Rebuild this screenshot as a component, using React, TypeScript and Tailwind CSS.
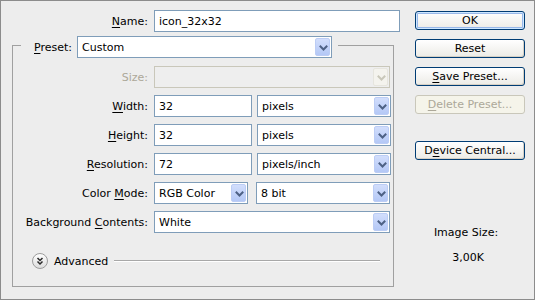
import React from "react";

type SelectProps = {
  value?: string;
  width: string;
  disabled?: boolean;
};

function Chevron({ disabled }: { disabled?: boolean }) {
  return (
    <svg width="15" height="18" viewBox="0 0 15 18">
      <path
        d="M4.5 7.5 L7.5 10.5 L10.5 7.5"
        fill="none"
        stroke={disabled ? "#c9c7ba" : "#4d6185"}
        strokeWidth="2"
        strokeLinecap="square"
      />
    </svg>
  );
}

function Select({ value, width, disabled }: SelectProps) {
  return (
    <div
      className={`${width} h-[22px] flex items-center border ${
        disabled
          ? "border-[#c9c7ba] bg-[#eeeeee]"
          : "border-[#7f9db9] bg-white"
      }`}
    >
      <span className="flex-1 pl-[4px] truncate">{value}</span>
      <div
        className={`w-[15px] h-[18px] mr-[1px] rounded-[2px] border ${
          disabled
            ? "border-[#e6e5de] bg-[#f4f3ee]"
            : "border-[#bccdf5] bg-linear-to-b from-[#d2defc] to-[#b4c8f6]"
        }`}
      >
        <Chevron disabled={disabled} />
      </div>
    </div>
  );
}

function Input({ value, width }: { value: string; width: string }) {
  return (
    <div
      className={`${width} h-[22px] flex items-center border border-[#7f9db9] bg-white pl-[4px]`}
    >
      {value}
    </div>
  );
}

function Label({
  pre,
  u,
  post,
  width,
  disabled,
}: {
  pre?: string;
  u?: string;
  post: string;
  width: string;
  disabled?: boolean;
}) {
  return (
    <div
      className={`${width} text-right shrink-0 ${
        disabled ? "text-[#aca899]" : "text-black"
      }`}
    >
      {pre}
      {u && <span className="underline underline-offset-2">{u}</span>}
      {post}
    </div>
  );
}

function Btn({
  children,
  disabled,
  isDefault,
}: {
  children: React.ReactNode;
  disabled?: boolean;
  isDefault?: boolean;
}) {
  if (disabled) {
    return (
      <div className="w-[110px] h-[19px] rounded-[3px] border border-[#c9c7ba] bg-[#f5f4ea] text-[#aca899] flex items-center justify-center">
        {children}
      </div>
    );
  }
  return (
    <div
      className={`w-[110px] h-[19px] rounded-[3px] border border-[#003c74] bg-linear-to-b from-white to-[#ecebe6] text-black flex items-center justify-center ${
        isDefault
          ? "shadow-[inset_0_0_0_1px_#cee7ff,inset_0_0_0_2px_#98b8ea]"
          : "shadow-[inset_-1px_-1px_0_#d6d0c5]"
      }`}
    >
      {children}
    </div>
  );
}

function AdvancedIcon() {
  return (
    <svg width="16" height="16" viewBox="0 0 16 16">
      <defs>
        <linearGradient id="adv" x1="0" y1="0" x2="0" y2="1">
          <stop offset="0" stopColor="#ffffff" />
          <stop offset="1" stopColor="#dcdcdc" />
        </linearGradient>
      </defs>
      <circle cx="8" cy="8" r="7.5" fill="url(#adv)" stroke="#9c9c9c" />
      <path
        d="M5.5 5 L8 7.5 L10.5 5 M5.5 8.5 L8 11 L10.5 8.5"
        fill="none"
        stroke="#2a2a2a"
        strokeWidth="1.5"
      />
    </svg>
  );
}

export default function App() {
  return (
    <div className="w-[535px] h-[300px] border border-[#8c8c8c] bg-[#ededed] flex font-['DejaVu_Sans',sans-serif] text-[11px] leading-[13px] text-black">
      {/* Left side */}
      <div className="w-[405px] pt-[9px]">
        <div className="flex items-center gap-[6px]">
          <Label u="N" post="ame:" width="w-[147px]" />
          <Input value="icon_32x32" width="w-[246px]" />
        </div>

        <fieldset className="ml-[11px] w-[382px] border border-[#a0a0a0] pb-[17px]">
          <legend className="ml-[8px] pt-[4px] pl-[13px] pr-[6px]">
            <div className="flex items-center gap-[5px]">
              <Label u="P" post="reset:" width="w-auto" />
              <Select value="Custom" width="w-[255px]" />
            </div>
          </legend>

          <div className="mt-[8px] flex flex-col gap-[7px]">
            <div className="flex items-center gap-[6px]">
              <Label post="Size:" width="w-[135px]" disabled />
              <Select width="w-[236px]" disabled />
            </div>
            <div className="flex items-center gap-[6px]">
              <Label u="W" post="idth:" width="w-[135px]" />
              <Input value="32" width="w-[98px]" />
              <Select value="pixels" width="w-[134px] ml-[-1px]" />
            </div>
            <div className="flex items-center gap-[6px]">
              <Label u="H" post="eight:" width="w-[135px]" />
              <Input value="32" width="w-[98px]" />
              <Select value="pixels" width="w-[134px] ml-[-1px]" />
            </div>
            <div className="flex items-center gap-[6px]">
              <Label u="R" post="esolution:" width="w-[135px]" />
              <Input value="72" width="w-[98px]" />
              <Select value="pixels/inch" width="w-[134px] ml-[-1px]" />
            </div>
            <div className="flex items-center gap-[6px]">
              <Label pre="Color " u="M" post="ode:" width="w-[135px]" />
              <Select value="RGB Color" width="w-[94px]" />
              <Select value="8 bit" width="w-[134px] ml-[2px]" />
            </div>
            <div className="flex items-center gap-[6px]">
              <Label pre="Background " u="C" post="ontents:" width="w-[135px]" />
              <Select value="White" width="w-[236px]" />
            </div>

            <div className="mt-[13px] flex items-center h-[16px] pl-[19px] pr-[13px]">
              <AdvancedIcon />
              <span className="ml-[6px]">Advanced</span>
              <div className="flex-1 ml-[6px] border-t border-[#a8a8a8] border-b border-b-white" />
            </div>
          </div>
        </fieldset>
      </div>

      {/* Right side */}
      <div className="flex-1 pl-[9px] pt-[10px] flex flex-col">
        <div className="flex flex-col gap-[9px]">
          <Btn isDefault>OK</Btn>
          <Btn>Reset</Btn>
          <Btn>
            <span className="underline underline-offset-2">S</span>ave Preset...
          </Btn>
          <Btn disabled>
            <span className="underline underline-offset-2">D</span>elete Preset...
          </Btn>
        </div>
        <div className="mt-[27px]">
          <Btn>
            D<span className="underline underline-offset-2">e</span>vice Central...
          </Btn>
        </div>
        <div className="w-[102px] mt-[66px] text-center">Image Size:</div>
        <div className="w-[106px] mt-[12px] text-center">3,00K</div>
      </div>
    </div>
  );
}
